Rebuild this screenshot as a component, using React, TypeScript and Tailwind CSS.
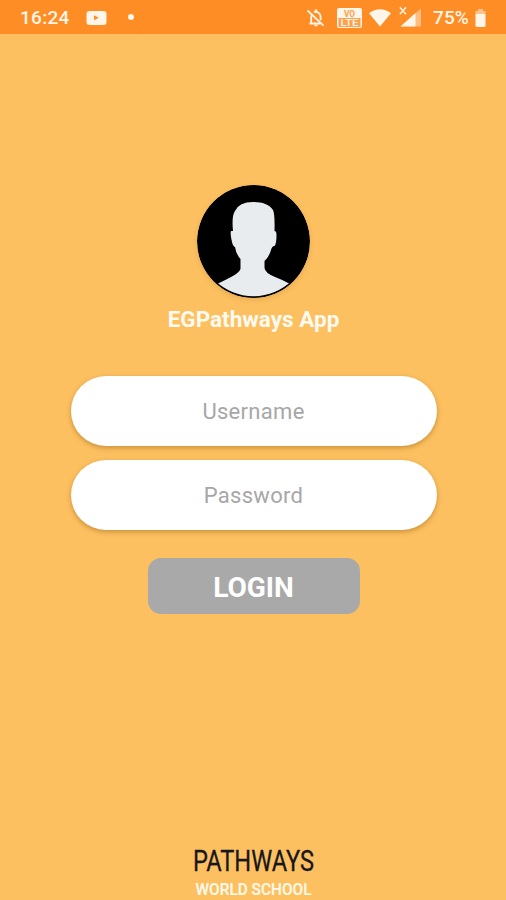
import type { ComponentProps } from "react";

function StatusBar() {
  return (
    <header className="flex h-[34px] shrink-0 items-center bg-[#ff8d25] pr-5 pl-5 text-[19px] font-medium text-[#fff5e8]">
      <span className="mt-[3px] w-[66px] tracking-[0.3px]">16:24</span>
      <svg className="mt-px h-4 w-[21px]" viewBox="0 0 21 16" fill="currentColor">
        <path
          fillRule="evenodd"
          d="M3.5 1h14Q20.5 1 20.5 4v8q0 3-3 3h-14q-3 0-3-3V4q0-3 3-3ZM8 5.2v5L12.7 7.7Z"
        />
      </svg>
      <span className="ml-[21px] size-[6px] rounded-full bg-[#fff5e8]" />

      <div className="mt-0.5 ml-auto flex items-center">
        <svg className="h-5 w-5" viewBox="0 0 20 20" fill="none" stroke="currentColor">
          <path
            strokeWidth="1.8"
            d="M3.5 15.5h11M5.2 15V9.5Q5.2 7.6 6.5 6M8 4.5Q10 3.4 12 4.5 14.6 5.9 14.6 9.2v3"
          />
          <path strokeWidth="1.8" d="M1.5 2.5l16 15.2" />
          <path fill="currentColor" stroke="none" d="M8.8 1.6h2.4v2.6H8.8ZM8 16.6h4q-.5 2-2 2t-2-2Z" />
        </svg>
        <svg className="ml-[11px] h-5 w-[25px]" viewBox="0 0 25 20">
          <rect width="25" height="20" rx="2" fill="currentColor" />
          <rect x="1.5" y="10" width="22" height="9" fill="#ffa04d" />
          <text
            x="12.5"
            y="8.5"
            textAnchor="middle"
            fontSize="8.5"
            fontWeight="700"
            fill="#ff9c45"
            textLength="11"
            lengthAdjust="spacingAndGlyphs"
          >
            VO
          </text>
          <text
            x="3.5"
            y="17.5"
            fontSize="8.5"
            fontWeight="500"
            fill="currentColor"
            textLength="18"
            lengthAdjust="spacingAndGlyphs"
          >
            LTE
          </text>
        </svg>
        <svg className="ml-[7px] h-[18px] w-[22px]" viewBox="0 0 22 18" fill="currentColor">
          <path d="M0 4.2Q11-3.8 22 4.2L11 17.5Z" />
        </svg>
        <svg className="ml-2 h-5 w-[23px] overflow-visible" viewBox="0 0 23 20">
          <path d="M1.5 18.5 22 .5v18Z" fill="#ffbd80" />
          <path d="M1.5 18.5 16.5 5v13.5Z" fill="currentColor" />
          <path d="M.8-.7l6.2 7M7-.7l-6.2 7" stroke="currentColor" strokeWidth="1.4" />
        </svg>
        <span className="mt-px ml-[11px] w-[42px] tracking-[0.1px]">75%</span>
        <svg className="h-[18px] w-[11px]" viewBox="0 0 11 18">
          <path d="M3 0h5v2h2.5v4H.5V2H3Z" fill="#ffc48c" />
          <path d="M.5 5h10v11.5q0 1.5-1.5 1.5H2Q.5 18 .5 16.5Z" fill="currentColor" />
        </svg>
      </div>
    </header>
  );
}

function Avatar() {
  return (
    <svg
      className="size-[113px] rounded-full shadow-[0_2px_5px_rgba(120,70,0,0.15)]"
      viewBox="0 0 113 113"
    >
      <defs>
        <clipPath id="avatar">
          <circle cx="56.5" cy="56" r="55.2" />
        </clipPath>
      </defs>
      <circle cx="56.5" cy="56.5" r="56.5" fill="#000" />
      <path
        clipPath="url(#avatar)"
        fill="#e8ecee"
        d="M56 17C65 17 72 19 76 25Q78 29 77.5 46Q79.5 46 79.5 50Q79.5 59 77.5 61Q75 61 74 65Q72 72 67.5 76V83Q68 88 78 92Q86 95 92 98.5L113 113H0L21 98.5Q26 96 34 92Q42 88 43.5 84V74Q39 69 38 62Q36 61.5 35 57Q33 49 34 46H36Q34.5 31 38 26Q42 17 56 17Z"
      />
    </svg>
  );
}

function Field(props: ComponentProps<"input">) {
  return (
    <input
      className="h-[70px] w-[366px] rounded-full bg-white text-center text-[22px] tracking-[0.3px] text-gray-700 shadow-[0_2px_5px_rgba(130,75,0,0.4)] outline-none placeholder:text-[#a7a7a7]"
      {...props}
    />
  );
}

function SchoolLogo() {
  return (
    <svg
      className="h-[60px] w-[184px] overflow-visible"
      viewBox="0 0 184 60"
      fontFamily="Roboto, sans-serif"
    >
      <text
        x="32"
        y="31.3"
        fontSize="29"
        fill="#17171c"
        stroke="#17171c"
        strokeWidth="0.3"
        textLength="121"
        lengthAdjust="spacingAndGlyphs"
      >
        PATHWAYS
      </text>
      <text
        x="34.5"
        y="55"
        fontSize="16.5"
        fontWeight="500"
        fill="#fff9e9"
        stroke="#fff9e9"
        strokeWidth="0.2"
        textLength="116"
        lengthAdjust="spacingAndGlyphs"
      >
        WORLD SCHOOL
      </text>
    </svg>
  );
}

export default function App() {
  return (
    <div className="flex h-screen flex-col overflow-hidden bg-[#fcc060] font-['Roboto',sans-serif]">
      <StatusBar />
      <main className="flex flex-1 flex-col items-center pt-[151px] pl-px">
        <Avatar />
        <h1 className="mt-[5px] text-[22.5px] leading-8 font-bold text-[#fffaf0]">EGPathways App</h1>
        <form className="mt-[41px] flex flex-col items-center gap-[14px]">
          <Field type="text" placeholder="Username" />
          <Field type="password" placeholder="Password" />
          <button
            type="button"
            className="mt-[14px] h-14 w-[212px] rounded-[13px] bg-[#a9a9a9] pt-1 text-[28px] font-bold text-white"
          >
            LOGIN
          </button>
        </form>
      </main>
      <footer className="flex shrink-0 justify-center">
        <SchoolLogo />
      </footer>
    </div>
  );
}
